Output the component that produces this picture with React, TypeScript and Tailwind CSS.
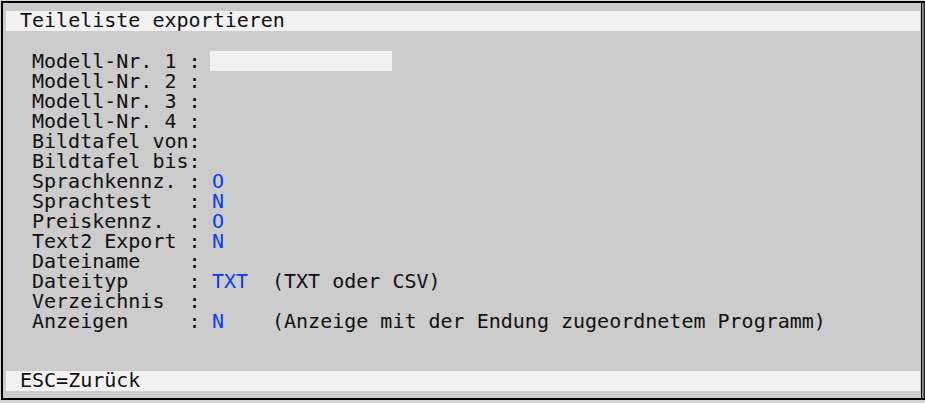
const rows: { label: string; value?: string; note?: string; input?: boolean }[] = [
  { label: "Modell-Nr. 1 :", input: true },
  { label: "Modell-Nr. 2 :" },
  { label: "Modell-Nr. 3 :" },
  { label: "Modell-Nr. 4 :" },
  { label: "Bildtafel von:" },
  { label: "Bildtafel bis:" },
  { label: "Sprachkennz. :", value: "O" },
  { label: "Sprachtest   :", value: "N" },
  { label: "Preiskennz.  :", value: "O" },
  { label: "Text2 Export :", value: "N" },
  { label: "Dateiname    :" },
  { label: "Dateityp     :", value: "TXT", note: "(TXT oder CSV)" },
  { label: "Verzeichnis  :" },
  { label: "Anzeigen     :", value: "N", note: "(Anzeige mit der Endung zugeordnetem Programm)" },
];

export default function App() {
  return (
    <div className="w-[925px] h-[403px] bg-[#d4d4d4] pt-px pl-px pb-[3px] flex font-['DejaVu_Sans_Mono',monospace] text-[20px] leading-[20px] text-[#111]">
      <div className="flex-1 flex border-y-2 border-l-2 border-black bg-[#cccccc]">
        {/* Maske */}
        <div className="flex-1 flex flex-col pl-[3px] pr-px pt-2">
          <div className="h-5 bg-[#f2f2f2] pl-[14px] whitespace-pre">
            <span className="relative -top-px">Teileliste exportieren</span>
          </div>

          <div className="mt-5 pl-[26px] flex flex-col">
            {rows.map((r) => (
              <div key={r.label} className="h-5 flex whitespace-pre">
                <span className="w-[180px]">{r.label}</span>
                {r.input && <div className="ml-[-2px] w-[182px] h-5 bg-[#f0f0f0]" />}
                {r.value && <span className="w-[60px] text-[#0a3cf0]">{r.value}</span>}
                {r.note && <span>{r.note}</span>}
              </div>
            ))}
          </div>

          <div className="mt-10 h-5 bg-[#f2f2f2] pl-[14px] whitespace-pre">
            <span className="relative -top-px">ESC=Zurück</span>
          </div>
        </div>

        {/* Fensterrand rechts */}
        <div className="w-1 flex">
          <div className="w-px bg-black" />
          <div className="w-px bg-[#c88a3c]" />
          <div className="w-px bg-[#3a7bd5]" />
          <div className="w-px bg-[#222]" />
        </div>
      </div>
    </div>
  );
}
